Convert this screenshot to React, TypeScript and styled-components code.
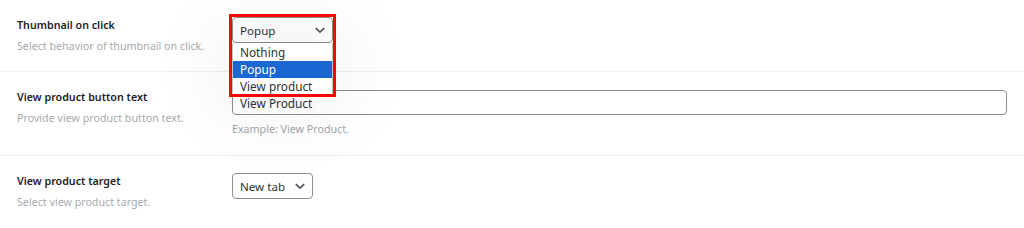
import React from 'react';
import styled, { createGlobalStyle } from 'styled-components';

const GlobalStyle = createGlobalStyle`
  html, body {
    margin: 0;
    padding: 0;
    background: #ffffff;
    font-family: "Noto Sans", "Open Sans", Arial, sans-serif;
    color: #1d2327;
  }
`;

const Page = styled.div`
  width: 1024px;
  height: 228px;
  overflow: hidden;
  background: #fff;
`;

const Row = styled.div<{ $h: number; $last?: boolean }>`
  display: grid;
  grid-template-columns: 215px 1fr;
  height: ${(p) => p.$h}px;
  box-sizing: border-box;
  padding: 15px 17px 0 17px;
  border-bottom: ${(p) => (p.$last ? 'none' : '1px solid #f0f0f1')};
`;

const Label = styled.div`
  font-size: 10.7px;
  font-weight: 600;
  line-height: 20px;
  white-space: nowrap;
  color: #1d2327;
`;

const Desc = styled.div`
  font-size: 10.7px;
  line-height: 20px;
  margin-top: 1px;
  white-space: nowrap;
  color: #a7aaad;
`;

const Field = styled.div<{ $top: number }>`
  padding-top: ${(p) => p.$top}px;
  position: relative;
`;

const Select = styled.div<{ $w: number }>`
  width: ${(p) => p.$w}px;
  height: 26px;
  box-sizing: border-box;
  border: 1px solid #8c8f94;
  border-radius: 4px;
  background: #fff;
  display: flex;
  align-items: center;
  justify-content: space-between;
  padding: 0 6px 0 7px;
  font-size: 11.6px;
  color: #2c3338;
`;

const Chevron = () => (
  <svg width="12" height="12" viewBox="0 0 12 12">
    <path d="M1.8 4.2 L6 8.2 L10.2 4.2" fill="none" stroke="#50575e" strokeWidth="1.7" />
  </svg>
);

const SelectWrap = styled.div`
  position: relative;
  width: 101px;
`;

const Highlight = styled.div`
  position: absolute;
  left: -3px;
  top: -3px;
  width: 107px;
  height: 83px;
  box-sizing: border-box;
  border: 3px solid #f00;
  z-index: 3;
  pointer-events: none;
`;

const Dropdown = styled.ul`
  position: absolute;
  left: 0;
  top: 26px;
  width: 101px;
  margin: 0;
  padding: 1px 0 0 0;
  list-style: none;
  background: #fff;
  border: 1px solid #c3c4c7;
  border-top: none;
  box-sizing: border-box;
  box-shadow: 0 0 70px 20px rgba(0, 0, 0, 0.05);
  z-index: 2;
`;

const Option = styled.li<{ $active?: boolean }>`
  height: 17px;
  line-height: 17px;
  padding-left: 7px;
  font-size: 11.8px;
  background: ${(p) => (p.$active ? '#1a67d2' : 'transparent')};
  color: ${(p) => (p.$active ? '#fff' : '#2c3338')};
`;

const TextInput = styled.div`
  width: 775px;
  height: 25px;
  box-sizing: border-box;
  border: 1px solid #8c8f94;
  border-radius: 4px;
  padding: 0 7px;
  line-height: 24px;
  font-size: 11.8px;
  color: #2c3338;
`;

const Help = styled.div`
  margin-top: 4px;
  font-size: 10.7px;
  line-height: 20px;
  color: #a0a5aa;
`;

export default function App() {
  return (
    <Page>
      <GlobalStyle />
      <Row $h={72}>
        <div>
          <Label>Thumbnail on click</Label>
          <Desc>Select behavior of thumbnail on click.</Desc>
        </div>
        <Field $top={2}>
          <SelectWrap>
            <Select $w={101}>
              <span>Popup</span>
              <Chevron />
            </Select>
            <Dropdown>
              <Option>Nothing</Option>
              <Option $active>Popup</Option>
              <Option>View product</Option>
            </Dropdown>
            <Highlight />
          </SelectWrap>
        </Field>
      </Row>
      <Row $h={84}>
        <div>
          <Label>View product button text</Label>
          <Desc>Provide view product button text.</Desc>
        </div>
        <Field $top={3}>
          <TextInput>View Product</TextInput>
          <Help>Example: View Product.</Help>
        </Field>
      </Row>
      <Row $h={72} $last>
        <div>
          <Label>View product target</Label>
          <Desc>Select view product target.</Desc>
        </div>
        <Field $top={2}>
          <Select $w={81}>
            <span>New tab</span>
            <Chevron />
          </Select>
        </Field>
      </Row>
    </Page>
  );
}
